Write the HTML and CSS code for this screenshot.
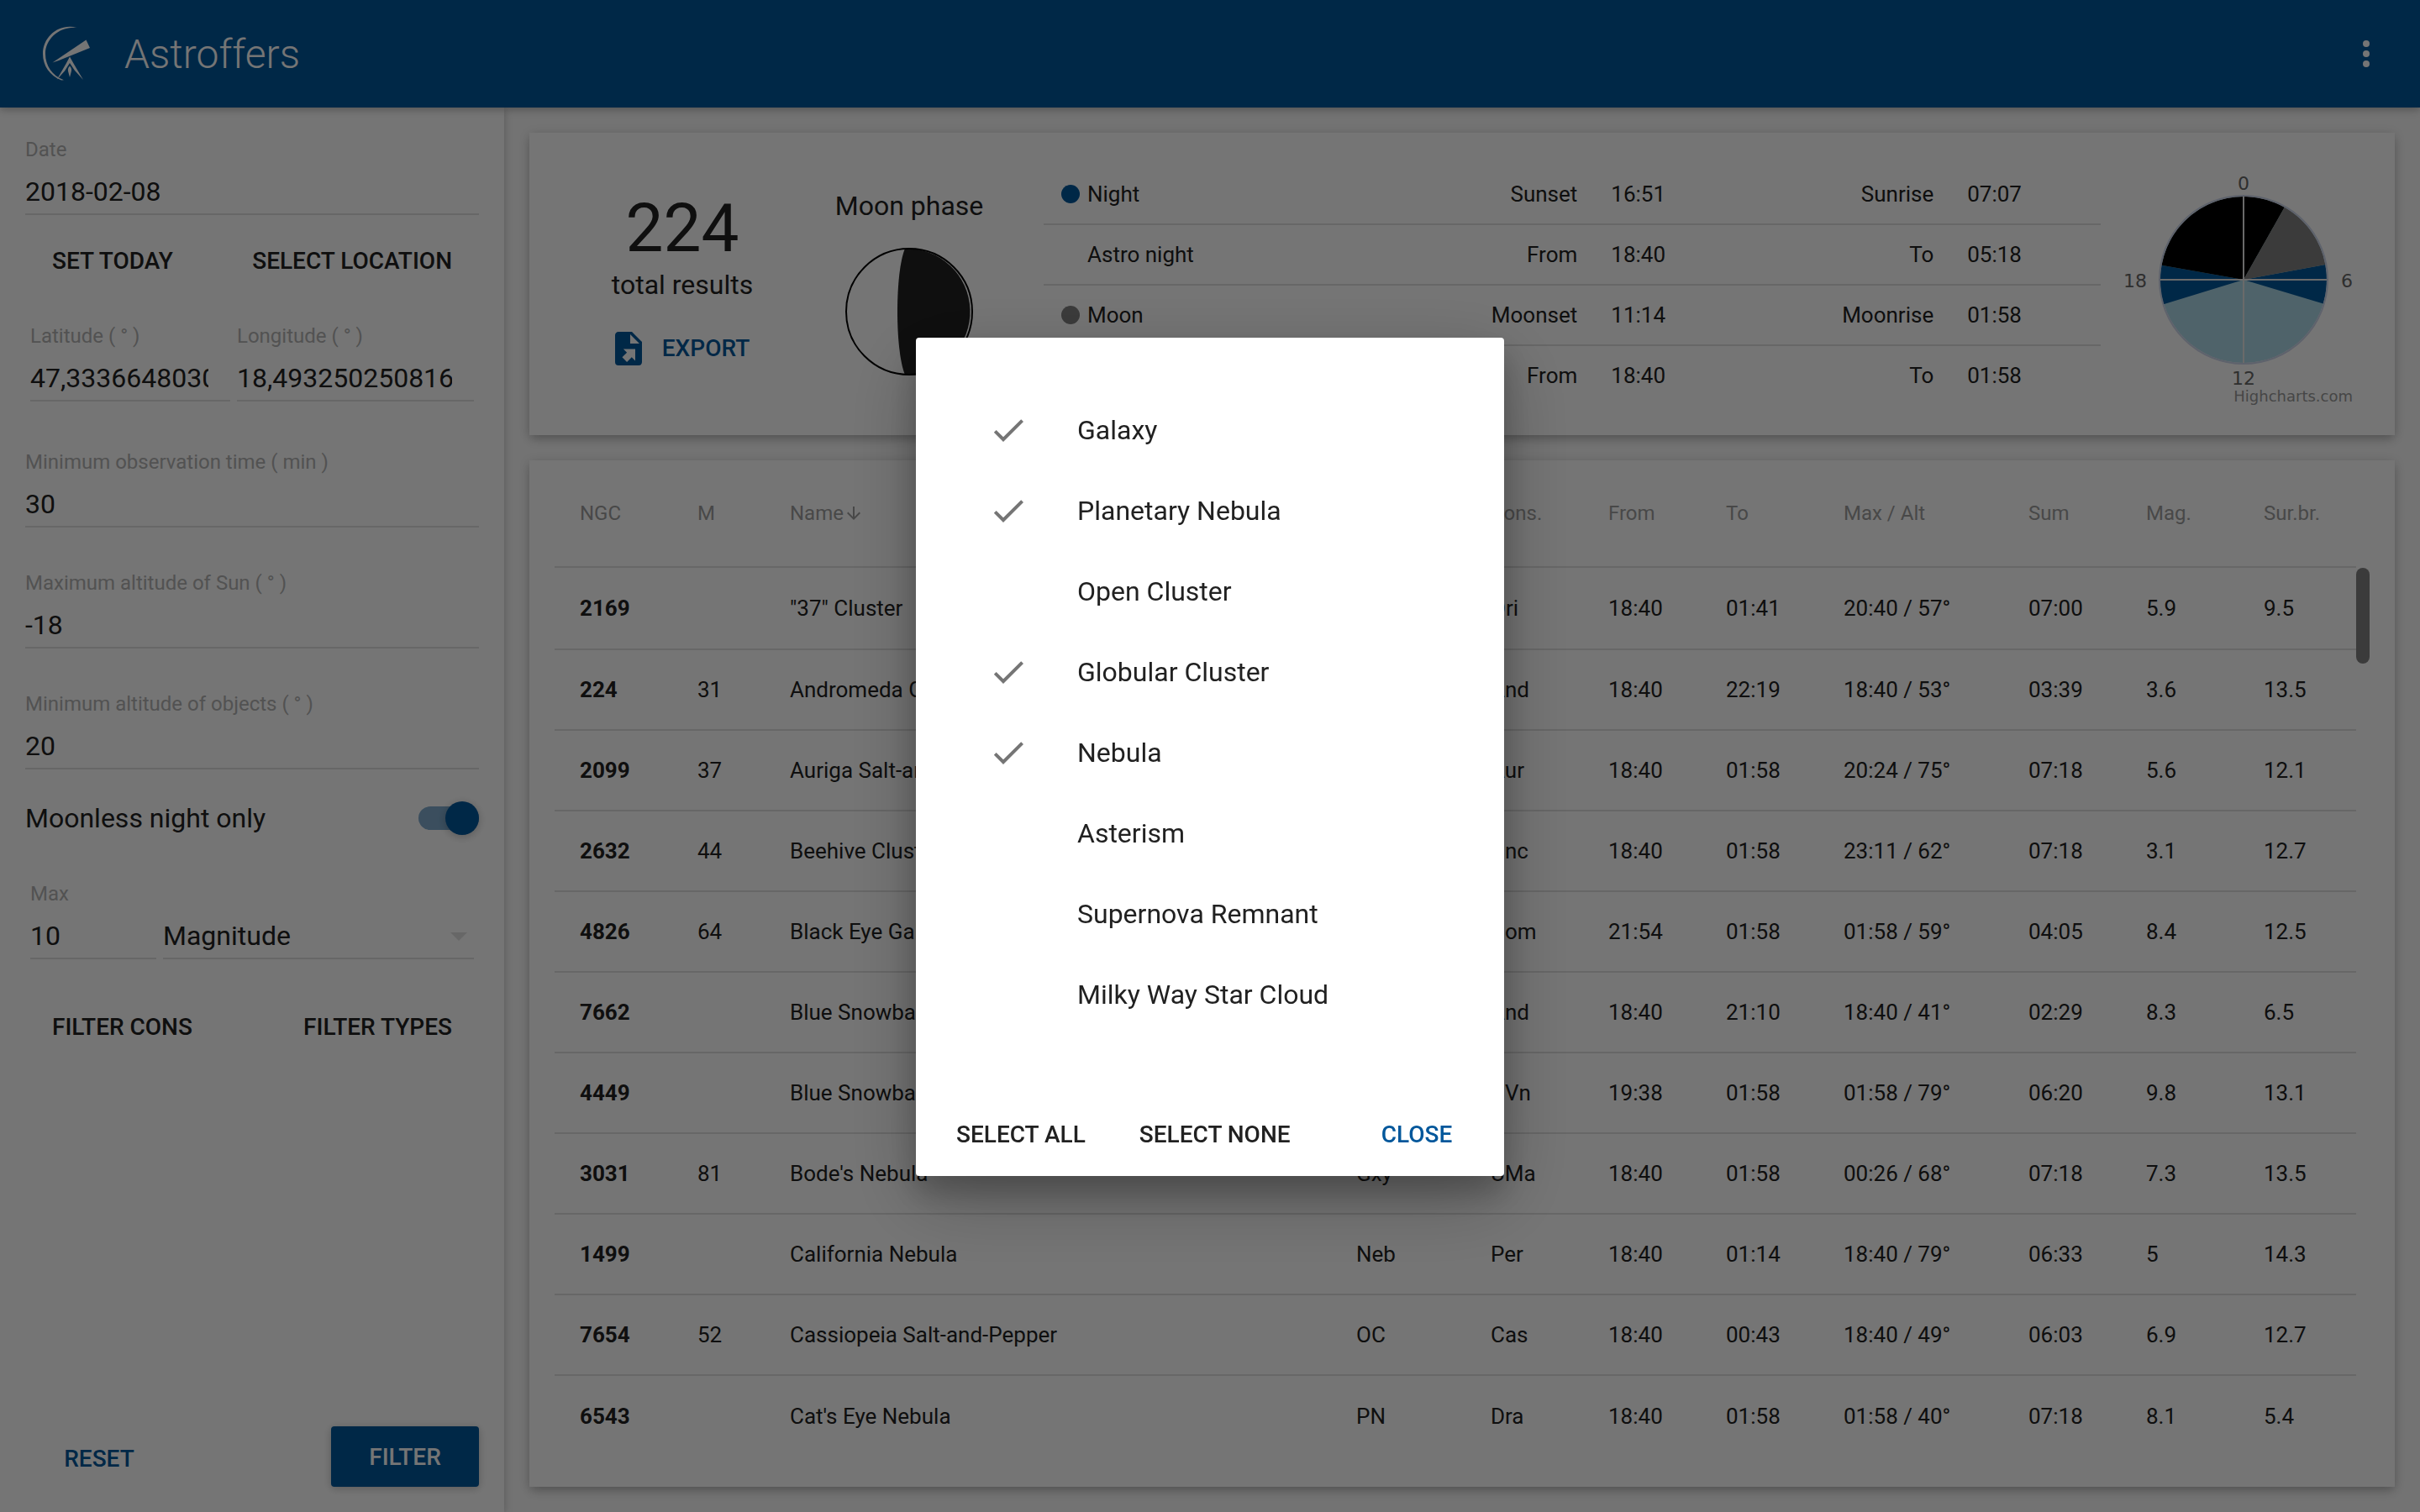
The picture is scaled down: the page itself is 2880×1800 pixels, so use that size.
FILE: index.html
```html
<!DOCTYPE html>
<html lang="en">
<head>
<meta charset="utf-8">
<title>Astroffers</title>
<link rel="stylesheet" href="styles.css">
</head>
<body>
<div class="app">
  <header class="app-bar">
    <svg class="logo" viewBox="0 0 72 76" aria-hidden="true">
      <path d="M48 7C27 1 7 17 7 38c0 14 8 26 22 31.500l3-.2C18 64 10 52 10 38 10 20 27 5 48 7z"/>
      <path d="M18.500 48.500L58.500 21.500 63 31 26 46z"/>
      <path d="M39 41.500l4.500 8L55 69 45 58l-6-9-6 9.500L23.500 69 34.500 50z"/>
      <path d="M39 52.500c2.500 2.500 2.500 5 1.500 8L39 66l-1.500-5.500c-1-3-1-5.500 1.500-8z"/>
    </svg>
    <h1 class="app-title">Astroffers</h1>
    <button class="icon-button" type="button" aria-label="Menu">
      <svg class="icon" viewBox="0 0 24 24"><circle cx="12" cy="6" r="2"/><circle cx="12" cy="12" r="2"/><circle cx="12" cy="18" r="2"/></svg>
    </button>
  </header>

  <div class="content">
    <form class="sidebar">
      <div class="field">
        <label for="date">Date</label>
        <input id="date" type="text" value="2018-02-08">
      </div>
      <div class="button-row">
        <button class="flat-button" type="button">SET TODAY</button>
        <button class="flat-button" type="button">SELECT LOCATION</button>
      </div>
      <div class="pair pair-location">
        <div class="field">
          <label for="latitude">Latitude ( ° )</label>
          <input id="latitude" class="with-spinner" type="text" value="47,3336648030">
        </div>
        <div class="field">
          <label for="longitude">Longitude ( ° )</label>
          <input id="longitude" class="with-spinner" type="text" value="18,493250250816">
        </div>
      </div>
      <div class="field">
        <label for="time">Minimum observation time ( min )</label>
        <input id="time" type="text" value="30">
      </div>
      <div class="field">
        <label for="sun">Maximum altitude of Sun ( ° )</label>
        <input id="sun" type="text" value="-18">
      </div>
      <div class="field">
        <label for="altitude">Minimum altitude of objects ( ° )</label>
        <input id="altitude" type="text" value="20">
      </div>
      <div class="toggle-row">
        <label for="moonless">Moonless night only</label>
        <input id="moonless" class="toggle" type="checkbox" role="switch" checked>
      </div>
      <div class="pair pair-limit">
        <div class="field">
          <label for="max">Max</label>
          <input id="max" type="text" value="10">
        </div>
        <div class="field select-field">
          <select aria-label="Brightness type"><option>Magnitude</option><option>Surface brightness</option></select>
          <svg class="select-arrow" viewBox="0 0 20 10"><path d="M0 0h20L10 10z"/></svg>
        </div>
      </div>
      <div class="button-row filter-row">
        <button class="flat-button" type="button">FILTER CONS</button>
        <button class="flat-button" type="button">FILTER TYPES</button>
      </div>
      <div class="button-row submit-row">
        <button class="flat-button primary" type="reset">RESET</button>
        <button class="raised-button" type="button">FILTER</button>
      </div>
    </form>

    <main class="main">
      <section class="card summary">
        <div class="results">
          <div class="results-count">224</div>
          <div class="results-label">total results</div>
          <button class="flat-button primary export" type="button">
            <svg class="icon" viewBox="0 0 24 24"><path d="M6 2C4.890 2 4 2.900 4 4v16a2 2 0 0 0 2 2h12a2 2 0 0 0 2-2V8l-6-6M13 3.500L18.500 9H13M8.930 12.220H16v7.070l-2.120-2.120L11.050 20l-2.830-2.830 2.830-2.820"/></svg>
            EXPORT
          </button>
        </div>
        <div class="moon">
          <div>Moon phase</div>
          <svg class="moon-disc" viewBox="0 0 156 156">
            <path class="moon-dark" d="M73 3A75 75 0 0 1 78 153H73C61 125 61 31 73 3z"/>
            <circle class="moon-rim" cx="78" cy="78" r="75"/>
          </svg>
        </div>
        <table class="nights">
          <tbody>
            <tr><th><span class="dot dot-night"></span>Night</th><td>Sunset</td><td>16:51</td><td>Sunrise</td><td>07:07</td></tr>
            <tr><th>Astro night</th><td>From</td><td>18:40</td><td>To</td><td>05:18</td></tr>
            <tr><th><span class="dot dot-moon"></span>Moon</th><td>Moonset</td><td>11:14</td><td>Moonrise</td><td>01:58</td></tr>
            <tr><th>Moonless night</th><td>From</td><td>18:40</td><td>To</td><td>01:58</td></tr>
          </tbody>
        </table>
        <svg class="chart" viewBox="0 0 300 300">
          <circle class="slice-day" cx="150" cy="145" r="99"/>
          <path class="slice-night" d="M150 145L54.800 174.200A99 99 0 0 1 52.500 127.800z"/>
          <path class="slice-night" d="M150 145L247.300 127A99 99 0 0 1 244.800 173.500z"/>
          <path class="slice-astro" d="M150 145L52.500 127.800A99 99 0 0 1 198.800 58.800z"/>
          <path class="slice-moon" d="M150 145L198.800 58.800A99 99 0 0 1 247.300 127z"/>
          <path class="chart-axis" d="M150 46v198M51 145h198"/>
          <circle class="chart-rim" cx="150" cy="145" r="100"/>
          <g class="chart-labels">
            <text x="150" y="38">0</text>
            <text x="273" y="154">6</text>
            <text x="150" y="270">12</text>
            <text x="21" y="154">18</text>
          </g>
          <text class="chart-credit" x="280" y="290">Highcharts.com</text>
        </svg>
      </section>

      <section class="card objects">
        <table class="objects-table">
          <colgroup>
            <col class="col-ngc"><col class="col-m"><col><col class="col-type"><col class="col-std"><col class="col-std"><col class="col-std"><col class="col-max"><col class="col-std"><col class="col-std"><col class="col-std">
          </colgroup>
          <thead>
            <tr><th>NGC</th><th>M</th><th><span class="sorted">Name<svg class="sort-icon" viewBox="0 0 24 24"><path d="M20 12l-1.410-1.410L13 16.170V4h-2v12.170l-5.580-5.590L4 12l8 8 8-8z"/></svg></span></th><th>Type</th><th>Cons.</th><th>From</th><th>To</th><th>Max / Alt</th><th>Sum</th><th>Mag.</th><th>Sur.br.</th></tr>
          </thead>
          <tbody>
            <tr><td>2169</td><td></td><td>"37" Cluster</td><td>OC</td><td>Ori</td><td>18:40</td><td>01:41</td><td>20:40 / 57°</td><td>07:00</td><td>5.9</td><td>9.5</td></tr>
            <tr><td>224</td><td>31</td><td>Andromeda Galaxy</td><td>Gxy</td><td>And</td><td>18:40</td><td>22:19</td><td>18:40 / 53°</td><td>03:39</td><td>3.6</td><td>13.5</td></tr>
            <tr><td>2099</td><td>37</td><td>Auriga Salt-and-Pepper</td><td>OC</td><td>Aur</td><td>18:40</td><td>01:58</td><td>20:24 / 75°</td><td>07:18</td><td>5.6</td><td>12.1</td></tr>
            <tr><td>2632</td><td>44</td><td>Beehive Cluster</td><td>OC</td><td>Cnc</td><td>18:40</td><td>01:58</td><td>23:11 / 62°</td><td>07:18</td><td>3.1</td><td>12.7</td></tr>
            <tr><td>4826</td><td>64</td><td>Black Eye Galaxy</td><td>Gxy</td><td>Com</td><td>21:54</td><td>01:58</td><td>01:58 / 59°</td><td>04:05</td><td>8.4</td><td>12.5</td></tr>
            <tr><td>7662</td><td></td><td>Blue Snowball</td><td>PN</td><td>And</td><td>18:40</td><td>21:10</td><td>18:40 / 41°</td><td>02:29</td><td>8.3</td><td>6.5</td></tr>
            <tr><td>4449</td><td></td><td>Blue Snowball</td><td>Gxy</td><td>CVn</td><td>19:38</td><td>01:58</td><td>01:58 / 79°</td><td>06:20</td><td>9.8</td><td>13.1</td></tr>
            <tr><td>3031</td><td>81</td><td>Bode's Nebula</td><td>Gxy</td><td>UMa</td><td>18:40</td><td>01:58</td><td>00:26 / 68°</td><td>07:18</td><td>7.3</td><td>13.5</td></tr>
            <tr><td>1499</td><td></td><td>California Nebula</td><td>Neb</td><td>Per</td><td>18:40</td><td>01:14</td><td>18:40 / 79°</td><td>06:33</td><td>5</td><td>14.3</td></tr>
            <tr><td>7654</td><td>52</td><td>Cassiopeia Salt-and-Pepper</td><td>OC</td><td>Cas</td><td>18:40</td><td>00:43</td><td>18:40 / 49°</td><td>06:03</td><td>6.9</td><td>12.7</td></tr>
            <tr><td>6543</td><td></td><td>Cat's Eye Nebula</td><td>PN</td><td>Dra</td><td>18:40</td><td>01:58</td><td>01:58 / 40°</td><td>07:18</td><td>8.1</td><td>5.4</td></tr>
          </tbody>
        </table>
        <div class="scroll-thumb"></div>
      </section>
    </main>
  </div>
</div>

<div class="overlay">
  <div class="dialog" role="dialog" aria-label="Filter types">
    <div class="type-list">
      <label class="type"><input type="checkbox" checked><svg class="icon" viewBox="0 0 24 24"><path d="M9 16.170L4.830 12l-1.420 1.410L9 19 21 7l-1.410-1.410z"/></svg><span>Galaxy</span></label>
      <label class="type"><input type="checkbox" checked><svg class="icon" viewBox="0 0 24 24"><path d="M9 16.170L4.830 12l-1.420 1.410L9 19 21 7l-1.410-1.410z"/></svg><span>Planetary Nebula</span></label>
      <label class="type"><input type="checkbox"><svg class="icon" viewBox="0 0 24 24"><path d="M9 16.170L4.830 12l-1.420 1.410L9 19 21 7l-1.410-1.410z"/></svg><span>Open Cluster</span></label>
      <label class="type"><input type="checkbox" checked><svg class="icon" viewBox="0 0 24 24"><path d="M9 16.170L4.830 12l-1.420 1.410L9 19 21 7l-1.410-1.410z"/></svg><span>Globular Cluster</span></label>
      <label class="type"><input type="checkbox" checked><svg class="icon" viewBox="0 0 24 24"><path d="M9 16.170L4.830 12l-1.420 1.410L9 19 21 7l-1.410-1.410z"/></svg><span>Nebula</span></label>
      <label class="type"><input type="checkbox"><svg class="icon" viewBox="0 0 24 24"><path d="M9 16.170L4.830 12l-1.420 1.410L9 19 21 7l-1.410-1.410z"/></svg><span>Asterism</span></label>
      <label class="type"><input type="checkbox"><svg class="icon" viewBox="0 0 24 24"><path d="M9 16.170L4.830 12l-1.420 1.410L9 19 21 7l-1.410-1.410z"/></svg><span>Supernova Remnant</span></label>
      <label class="type"><input type="checkbox"><svg class="icon" viewBox="0 0 24 24"><path d="M9 16.170L4.830 12l-1.420 1.410L9 19 21 7l-1.410-1.410z"/></svg><span>Milky Way Star Cloud</span></label>
    </div>
    <div class="dialog-actions">
      <button class="flat-button" type="button">SELECT ALL</button>
      <button class="flat-button" type="button">SELECT NONE</button>
      <button class="flat-button primary close" type="button">CLOSE</button>
    </div>
  </div>
</div>
</body>
</html>
```
FILE: styles.css
```css
:root {
  --primary: #01579b;
  --text: #212121;
  --muted: #9e9e9e;
  --hint: #b3b3b3;
  --line: #e0e0e0;
}

* {
  box-sizing: border-box;
}

body {
  margin: 0;
  font-family: Roboto, sans-serif;
  font-size: 32px;
  color: var(--text);
  background: #fafafa;
}

button,
input,
select {
  font: inherit;
  color: inherit;
}

.app {
  display: flex;
  flex-direction: column;
  min-height: 100vh;
}

.icon {
  display: block;
  width: 48px;
  height: 48px;
  fill: currentColor;
}

/* App bar */
.app-bar {
  position: relative;
  z-index: 2;
  display: flex;
  align-items: center;
  height: 128px;
  padding: 0 40px 0 44px;
  color: #fff;
  background: var(--primary);
  box-shadow: 0 2px 12px rgba(0, 0, 0, 0.16), 0 2px 8px rgba(0, 0, 0, 0.16);
}

.logo {
  width: 72px;
  height: 76px;
  margin-right: 32px;
  fill: currentColor;
}

.app-title {
  flex: 1;
  margin: 0;
  font-size: 48px;
  font-weight: 300;
}

.icon-button {
  padding: 0;
  border: 0;
  background: none;
}

.content {
  display: flex;
  flex: 1;
}

/* Buttons */
.flat-button,
.raised-button {
  min-width: 176px;
  height: 72px;
  border: 0;
  border-radius: 4px;
  font-size: 28px;
  font-weight: 500;
  white-space: nowrap;
}

.flat-button {
  padding: 4px 32px 0;
  background: none;
}

.raised-button {
  padding: 0 32px;
  color: #fff;
  background: var(--primary);
  box-shadow: 0 2px 12px rgba(0, 0, 0, 0.12), 0 2px 8px rgba(0, 0, 0, 0.12);
}

.primary {
  color: var(--primary);
}

.button-row {
  display: flex;
  justify-content: space-between;
}

/* Sidebar */
.sidebar {
  position: relative;
  z-index: 1;
  display: flex;
  flex-direction: column;
  flex: none;
  width: 600px;
  padding: 0 30px 30px;
  background: #fff;
  box-shadow: 0 2px 12px rgba(0, 0, 0, 0.12), 0 2px 8px rgba(0, 0, 0, 0.12);
}

.field {
  display: flex;
  flex-direction: column;
  height: 144px;
  padding: 34px 0 16px;
}

.field label {
  margin-bottom: 8px;
  font-size: 24px;
  line-height: 32px;
  color: var(--hint);
}

.field input,
.field select {
  width: 100%;
  height: 54px;
  padding: 0;
  border: 0;
  border-bottom: 2px solid var(--line);
  border-radius: 0;
  background: none;
  outline: 0;
  appearance: none;
}

.field .with-spinner {
  padding-right: 26px;
}

.pair {
  display: grid;
  gap: 8px;
  padding: 6px;
}

.pair-location {
  grid-template-columns: 238fr 282fr;
}

.pair-limit {
  grid-template-columns: 150fr 370fr;
}

.select-field {
  display: grid;
  align-items: end;
}

.select-field select,
.select-arrow {
  grid-area: 1 / 1;
}

.select-arrow {
  justify-self: end;
  width: 20px;
  height: 10px;
  margin: 0 8px 22px 0;
  fill: var(--line);
  pointer-events: none;
}

.toggle-row {
  display: flex;
  align-items: center;
  justify-content: space-between;
  height: 76px;
  padding-top: 8px;
}

.toggle {
  display: flex;
  align-items: center;
  width: 72px;
  height: 28px;
  margin: 0;
  border-radius: 14px;
  background: rgba(1, 87, 155, 0.5);
  appearance: none;
}

.toggle::before {
  content: "";
  width: 40px;
  height: 40px;
  margin-left: auto;
  border-radius: 50%;
  background: var(--primary);
  box-shadow: 0 2px 12px rgba(0, 0, 0, 0.12), 0 2px 8px rgba(0, 0, 0, 0.12);
}

.filter-row {
  margin-top: 20px;
}

.submit-row {
  margin-top: auto;
}

/* Main area */
.main {
  display: flex;
  flex: 1;
  flex-direction: column;
  gap: 30px;
  min-width: 0;
  padding: 30px;
}

.card {
  padding: 0 30px;
  background: #fff;
  box-shadow: 0 2px 12px rgba(0, 0, 0, 0.14), 0 6px 12px -2px rgba(0, 0, 0, 0.2);
}

.summary {
  display: grid;
  grid-template-columns: 304px 236px 1fr 300px;
  align-items: center;
  height: 360px;
}

.results,
.moon {
  display: flex;
  flex-direction: column;
  align-items: center;
  line-height: 40px;
}

.results-count {
  font-size: 80px;
  line-height: 94px;
}

.results-label {
  line-height: 40px;
}

.export {
  display: flex;
  align-items: center;
  gap: 16px;
  margin-top: 20px;
  padding: 0 32px 0 24px;
}

.moon {
  padding-bottom: 2px;
}

.moon-disc {
  width: 156px;
  height: 156px;
  margin-top: 28px;
}

.moon-dark {
  fill: #212121;
}

.moon-rim {
  fill: none;
  stroke: #000;
  stroke-width: 2;
}

.nights {
  margin: 2px 20px 0 42px;
  border-spacing: 0;
  table-layout: fixed;
  font-size: 26px;
}

.nights th,
.nights td {
  height: 72px;
  padding: 0;
  border-bottom: 2px solid var(--line);
}

.nights tr:last-child > * {
  height: 70px;
  border-bottom: 0;
}

.nights th {
  width: 34%;
  padding-left: 52px;
  font-weight: 400;
  text-align: left;
}

.nights td {
  width: 16.5%;
}

.nights td:nth-child(4) {
  width: 17.2%;
}

.nights td:last-child {
  width: 15.8%;
}

.nights td:nth-child(even) {
  text-align: right;
}

.nights td:nth-child(odd) {
  padding-left: 40px;
}

.dot {
  display: inline-block;
  width: 22px;
  height: 22px;
  margin: 0 9px 0 -31px;
  border-radius: 50%;
  vertical-align: -2px;
}

.dot-night {
  background: var(--primary);
}

.dot-moon {
  background: #808080;
}

/* Day chart */
.chart {
  width: 300px;
  height: 300px;
}

.slice-day {
  fill: #add8e6;
}

.slice-night {
  fill: var(--primary);
}

.slice-astro {
  fill: #000;
}

.slice-moon {
  fill: #808080;
}

.chart-axis {
  fill: none;
  stroke: #e6e6e6;
  stroke-width: 2;
}

.chart-rim {
  fill: none;
  stroke: #ccd6eb;
  stroke-width: 2;
}

.chart-labels,
.chart-credit {
  font-family: "DejaVu Sans", sans-serif;
}

.chart-labels {
  font-size: 22px;
  fill: #666;
  text-anchor: middle;
}

.chart-credit {
  font-size: 18px;
  fill: #999;
  text-anchor: end;
}

/* Objects table */
.objects {
  display: flex;
  flex: 1;
}

.objects-table {
  flex: 1;
  align-self: flex-start;
  border-spacing: 0;
  table-layout: fixed;
  font-size: 26px;
}

.col-ngc,
.col-std {
  width: 140px;
}

.col-m {
  width: 110px;
}

.col-type {
  width: 160px;
}

.col-max {
  width: 220px;
}

.objects-table th,
.objects-table td {
  padding: 0 0 0 30px;
  border-bottom: 2px solid var(--line);
  text-align: left;
  white-space: nowrap;
}

.objects-table th {
  height: 128px;
  font-size: 24px;
  font-weight: 400;
  color: var(--muted);
}

.objects-table td {
  height: 96px;
}

.objects-table tr:first-child td {
  height: 98px;
}

.objects-table tr:last-child td {
  border-bottom: 0;
}

.objects-table td:first-child {
  font-weight: 700;
}

.sorted {
  display: flex;
  align-items: center;
}

.sort-icon {
  width: 24px;
  height: 24px;
  fill: currentColor;
}

.scroll-thumb {
  width: 16px;
  height: 114px;
  margin-top: 128px;
  border-radius: 8px;
  background: #808080;
}

/* Dialog */
.overlay {
  position: fixed;
  inset: 0;
  z-index: 10;
  display: grid;
  place-items: center;
  padding-top: 2px;
  background: rgba(0, 0, 0, 0.54);
}

.dialog {
  width: 700px;
  border-radius: 4px;
  background: #fff;
  box-shadow: 0 28px 90px rgba(0, 0, 0, 0.25), 0 20px 36px rgba(0, 0, 0, 0.22);
}

.type-list {
  padding: 62px 48px 64px;
}

.type {
  display: grid;
  grid-template-columns: 48px 1fr;
  gap: 58px;
  align-items: center;
  height: 96px;
  padding-left: 38px;
}

.type input,
.type .icon {
  grid-area: 1 / 1;
}

.type input {
  width: 48px;
  height: 48px;
  margin: 0;
  appearance: none;
}

.type .icon {
  visibility: hidden;
  fill: #757575;
}

.type input:checked + .icon {
  visibility: visible;
}

.dialog-actions {
  display: flex;
  padding: 16px;
}

.close {
  margin-left: auto;
}
```
